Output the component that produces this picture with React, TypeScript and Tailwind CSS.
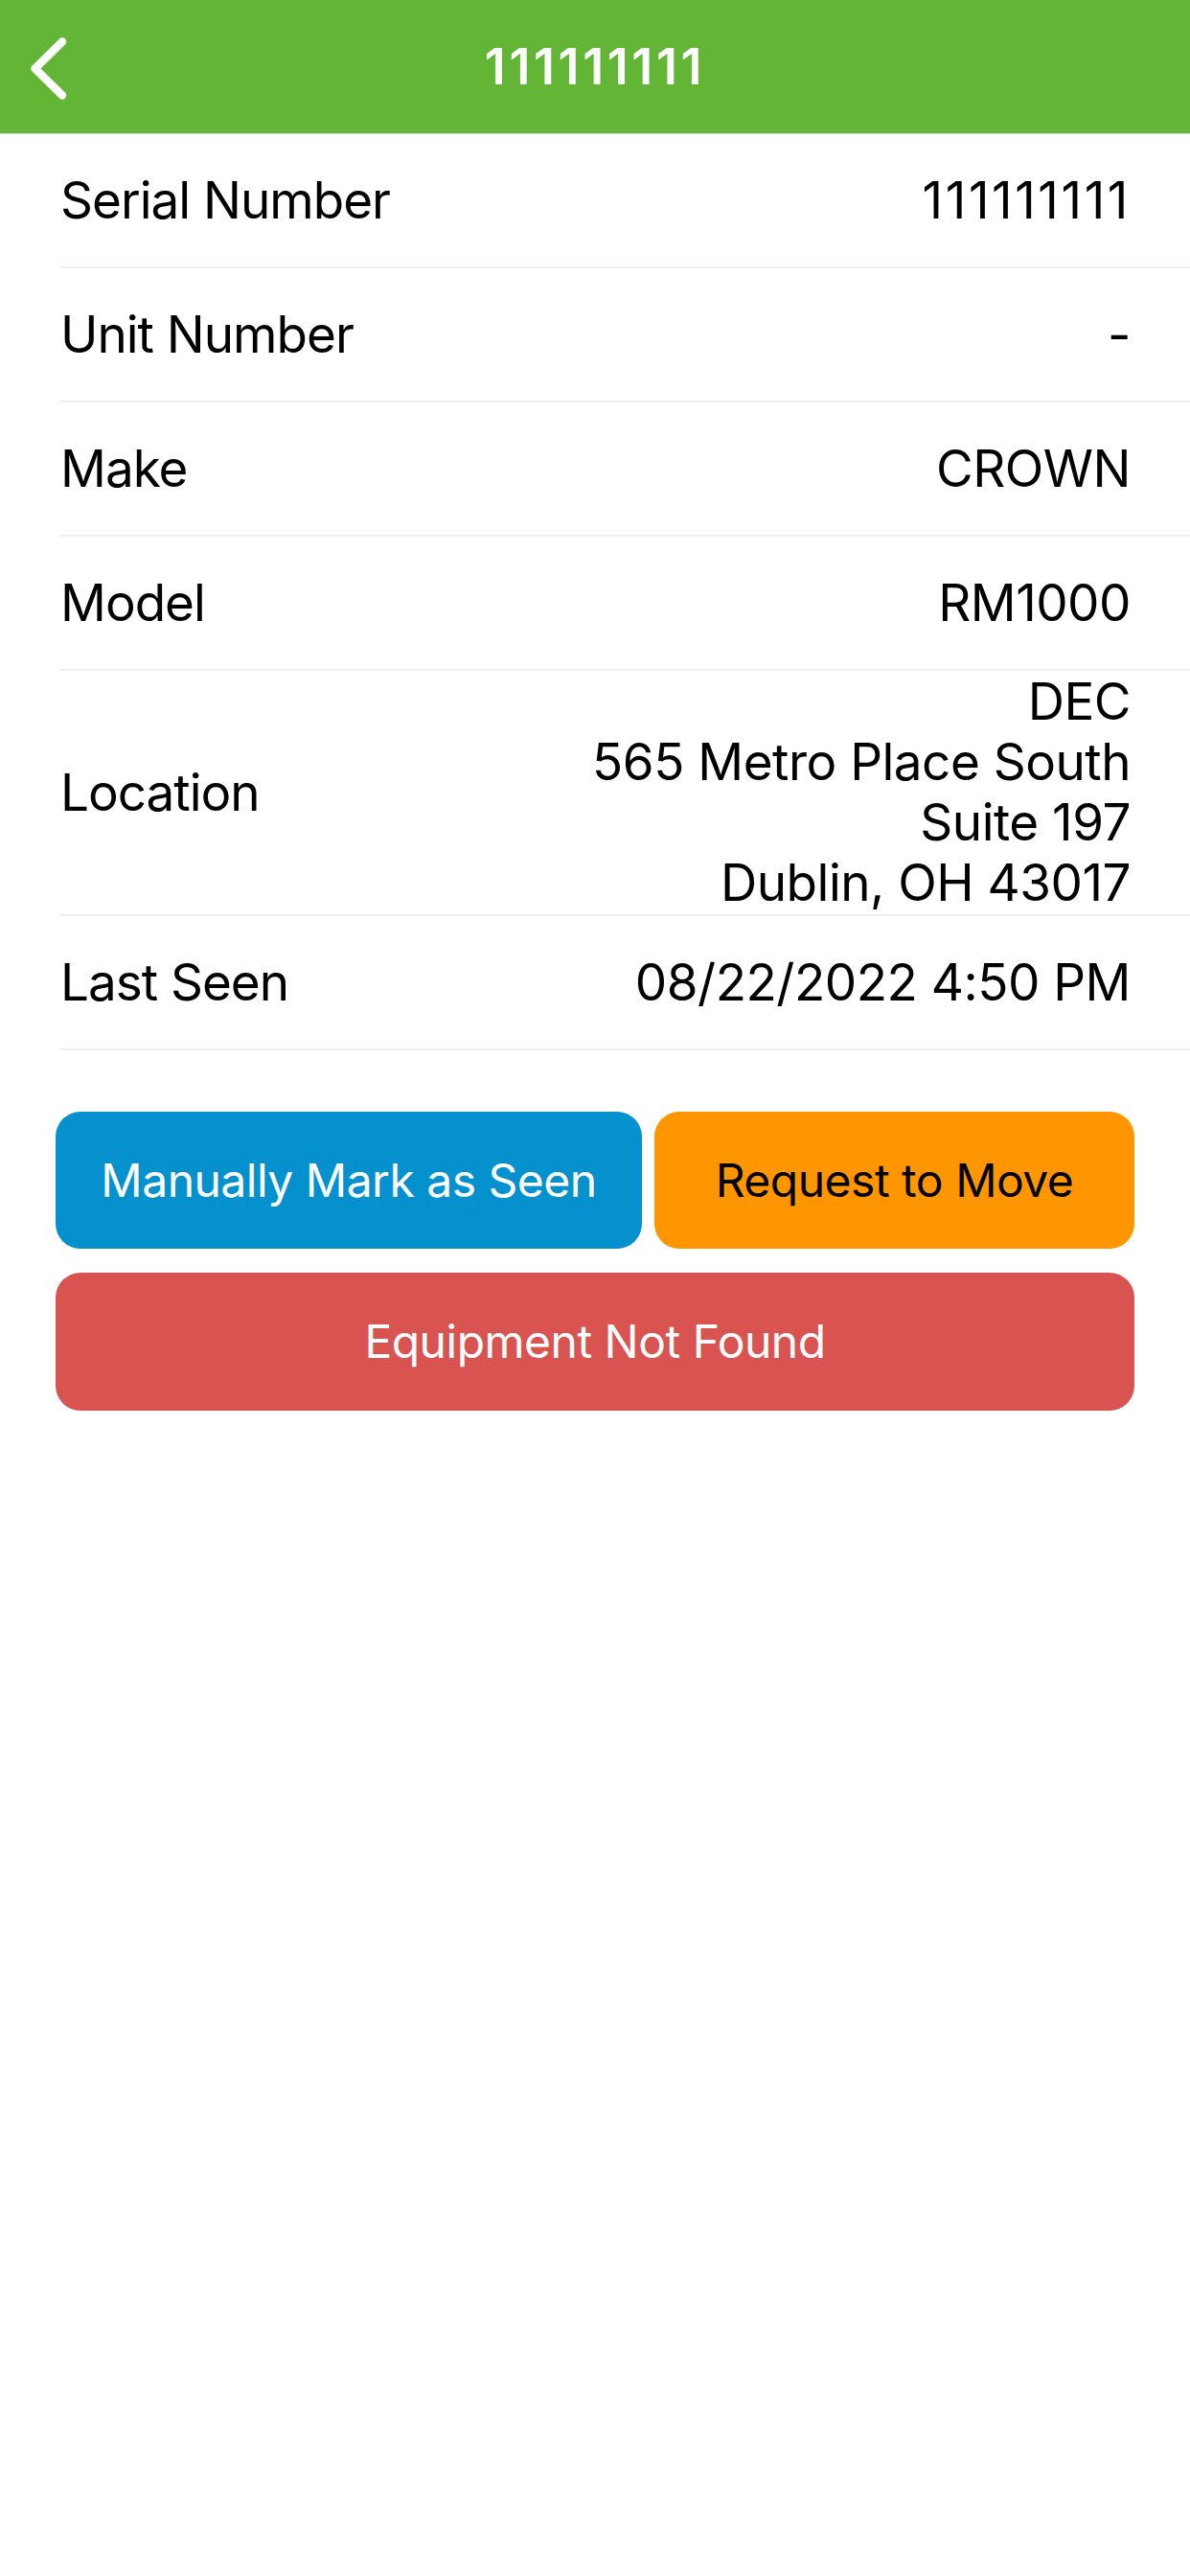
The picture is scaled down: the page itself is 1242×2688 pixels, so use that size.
const ROWS: { label: string; value: string[]; digits?: boolean }[] = [
  { label: "Serial Number", value: ["111111111"], digits: true },
  { label: "Unit Number", value: ["-"] },
  { label: "Make", value: ["CROWN"] },
  { label: "Model", value: ["RM1000"] },
  { label: "Location", value: ["DEC", "565 Metro Place South", "Suite 197", "Dublin, OH 43017"] },
  { label: "Last Seen", value: ["08/22/2022 4:50 PM"] },
];

function BackChevron() {
  return (
    <svg width="46" height="74" viewBox="0 0 46 74" fill="none">
      <path d="M41 10.5 L12.5 38.5 L41 66.5" stroke="white" strokeWidth="8.5" strokeLinecap="round" strokeLinejoin="round" />
    </svg>
  );
}

export default function App() {
  return (
    <div className="min-h-[2688px] w-full bg-white text-black" style={{ fontFamily: "Inter, 'Liberation Sans', sans-serif" }}>
      {/* Nav bar */}
      <header className="grid h-[140px] grid-cols-[1fr_auto_1fr] items-center border-b border-[#d6d6d6] bg-[#63b536]">
        <div className="pl-[24px]">
          <BackChevron />
        </div>
        <h1 className="text-[52px] font-semibold tracking-[3.6px] text-white">111111111</h1>
        <div />
      </header>

      {/* Detail rows */}
      <div className="pl-[63px]">
        {ROWS.map((row) => (
          <div
            key={row.label}
            className="flex min-h-[140px] items-center justify-between border-b-[2px] border-[#efefef] pr-[62px]"
          >
            <span className="text-[53px] leading-[63px] tracking-[-1px]">{row.label}</span>
            <div
              className={
                row.digits
                  ? "flex flex-col items-end py-[1px] text-right text-[53px] leading-[63px] tracking-[2.6px]"
                  : "flex flex-col items-end py-[1px] text-right text-[53px] leading-[63px] tracking-[-0.5px]"
              }
            >
              {row.value.map((line) => (
                <span key={line}>{line}</span>
              ))}
            </div>
          </div>
        ))}
      </div>

      {/* Actions */}
      <div className="flex flex-col gap-[25px] px-[58px] pt-[64px]">
        <div className="grid grid-cols-[612px_1fr] gap-[13px]">
          <button className="h-[143px] rounded-[26px] bg-[#0591ce] text-[48px] tracking-[-0.5px] text-white">
            Manually Mark as Seen
          </button>
          <button className="h-[143px] rounded-[26px] bg-[#ff9600] text-[48px] tracking-[-0.5px] text-black">
            Request to Move
          </button>
        </div>
        <button className="h-[144px] rounded-[26px] bg-[#d95350] text-[48px] tracking-[-0.5px] text-white">
          Equipment Not Found
        </button>
      </div>
    </div>
  );
}
